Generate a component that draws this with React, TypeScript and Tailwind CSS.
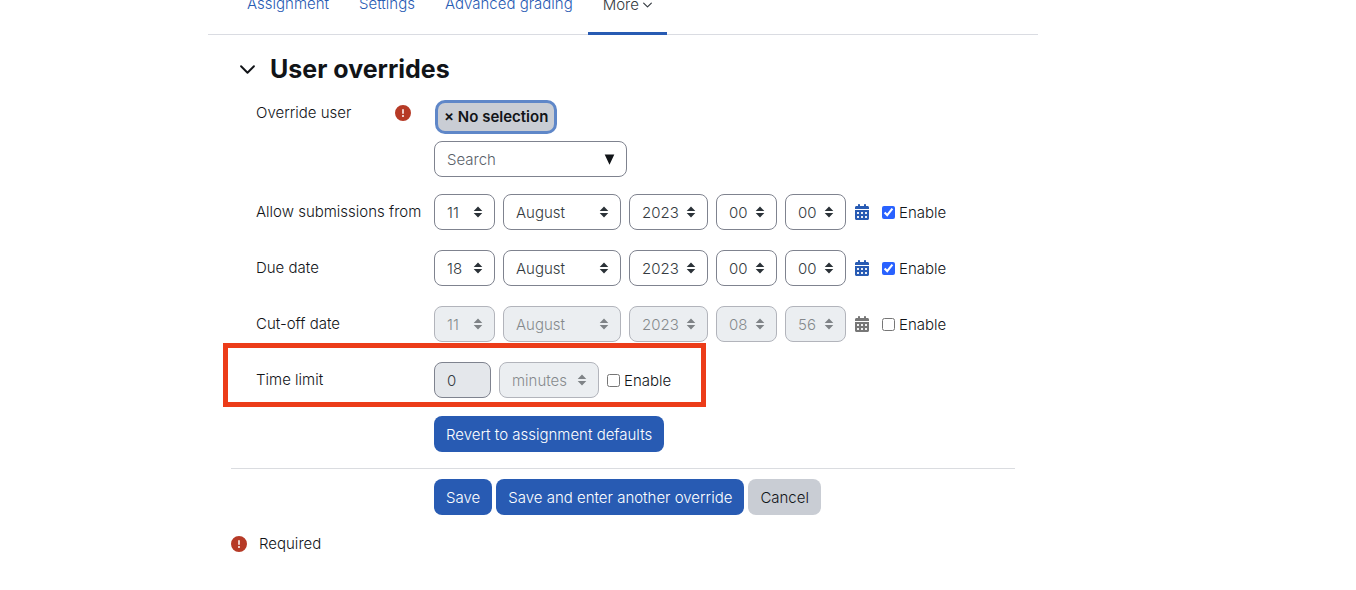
import React from 'react';

import { FaCalendarDays, FaCircleExclamation } from 'react-icons/fa6';

const dates = [
  {
    name: 'Allow submissions from',
    values: ['11', 'August', '2023', '00', '00'],
    enabled: true,
  },
  {
    name: 'Due date',
    values: ['18', 'August', '2023', '00', '00'],
    enabled: true,
  },
  {
    name: 'Cut-off date',
    values: ['11', 'August', '2023', '08', '56'],
    enabled: false,
  },
];

const parts = [
  { name: 'Day', width: 'w-[61px]' },
  { name: 'Month', width: 'w-[118px]' },
  { name: 'Year', width: 'w-[79px]' },
  { name: 'Hour', width: 'w-[61px]' },
  { name: 'Minute', width: 'w-[61px]' },
];

const primary =
  'h-9 px-3 pt-0.5 rounded-lg bg-[#285bb3] text-white whitespace-nowrap';

function Chevron({ className }: { className: string }) {
  return (
    <svg
      className={className}
      viewBox="0 0 14 8"
      fill="none"
      stroke="currentColor"
      strokeWidth="1.8"
      strokeLinecap="round"
      strokeLinejoin="round"
      aria-hidden="true"
    >
      <path d="M1 1l6 6 6-6" />
    </svg>
  );
}

function Select({
  label,
  value,
  width,
  disabled,
}: {
  label: string;
  value: string;
  width: string;
  disabled: boolean;
}) {
  return (
    <div className={`relative ${width} ${disabled ? 'opacity-60' : ''}`}>
      <select
        aria-label={label}
        disabled={disabled}
        defaultValue={value}
        className="block w-full h-9 pl-3 pr-6 pt-0.5 appearance-none rounded-lg border border-[#7f838f] bg-white text-[#343a40] disabled:bg-[#dee4e9] disabled:opacity-100"
      >
        <option>{value}</option>
      </select>
      <svg
        className="absolute right-3 top-3 w-[10px] h-3 pointer-events-none text-[#2b3238]"
        viewBox="0 0 10 12"
        fill="currentColor"
        aria-hidden="true"
      >
        <path d="M5 .5L9.3 5H.7zM5 11.5L.7 7h8.6z" />
      </svg>
    </div>
  );
}

function Enable({ name, checked }: { name: string; checked: boolean }) {
  return (
    <label className="flex items-center gap-1">
      <input
        type="checkbox"
        aria-label={`${name} enable`}
        defaultChecked={checked}
        className="w-[13px] h-[13px] accent-[#2962ff]"
      />
      <span className="pt-0.5">Enable</span>
    </label>
  );
}

function Row({
  label,
  children,
}: {
  label: React.ReactNode;
  children: React.ReactNode;
}) {
  return (
    <div className="relative flex items-start mb-5">
      <div className="w-[203px] shrink-0 flex items-center justify-between pl-[25px] pr-[23px] pt-1.5 whitespace-nowrap">
        {label}
      </div>
      {children}
    </div>
  );
}

export default function App() {
  return (
    <div className="pl-52 font-['Inter',sans-serif] font-light text-[15px] leading-6 text-[#111418]">
      <div className="max-w-[830px]">
        <nav className="flex items-end h-[35px] px-6 border-b border-[#dadce2] text-[#285bb3] whitespace-nowrap">
          <a href="#assignment" className="px-[15px] pb-[18px]">
            Assignment
          </a>
          <a href="#settings" className="px-[15px] pb-[18px]">
            Settings
          </a>
          <a href="#grading" className="px-[15px] pb-[18px]">
            Advanced grading
          </a>
          <a
            href="#more"
            className="flex items-center gap-1 px-[15px] pb-[15px] -mb-px border-b-3 border-[#285bb3] text-[#343a40]"
          >
            More
            <Chevron className="w-[9px] h-[6px]" />
          </a>
        </nav>

        <form className="px-[23px]" onSubmit={(e) => e.preventDefault()}>
          <h2 className="flex items-center h-[68px]">
            <button
              type="button"
              aria-label="Collapse"
              className="w-[39px] pl-[9px]"
            >
              <Chevron className="w-[15px] h-[9px]" />
            </button>
            <span className="text-[25px] font-bold">User overrides</span>
          </h2>

          <div className="flex items-start -mt-2 mb-[17px]">
            <div className="w-[203px] shrink-0 flex items-center justify-between pl-[25px] pr-[23px] pt-1.5">
              <label htmlFor="user">Override user</label>
              <FaCircleExclamation className="w-4 h-4 text-[#b63a26]" />
            </div>
            <div>
              <div className="flex pl-px pt-[5px]">
                <button
                  type="button"
                  className="h-[34px] px-1.5 rounded-[10px] border-3 border-[#5f87c8] bg-[#c9cdd4] font-semibold"
                >
                  × No selection
                </button>
              </div>
              <div className="relative mt-[7px] w-[193px]">
                <input
                  id="user"
                  type="text"
                  placeholder="Search"
                  className="block w-full h-9 px-3 rounded-lg border border-[#7f838f] placeholder:text-[#596169]"
                />
                <svg
                  className="absolute right-3 top-[13px] w-[11px] h-[11px]"
                  viewBox="0 0 11 11"
                  fill="currentColor"
                  aria-hidden="true"
                >
                  <path d="M.7 .5h9.6L5.5 10.7z" />
                </svg>
              </div>
            </div>
          </div>

          {dates.map((date) => (
            <Row key={date.name} label={date.name}>
              <div className="flex items-center gap-2">
                {parts.map((part, i) => (
                  <Select
                    key={part.name}
                    label={`${date.name} ${part.name}`}
                    value={date.values[i]}
                    width={part.width}
                    disabled={!date.enabled}
                  />
                ))}
                <button
                  type="button"
                  aria-label={`${date.name} calendar`}
                  disabled={!date.enabled}
                  className="px-px mr-1 text-[#285bb3] disabled:text-[#777777]"
                >
                  <FaCalendarDays className="w-[14px] h-4" />
                </button>
                <Enable name={date.name} checked={date.enabled} />
              </div>
            </Row>
          ))}

          <Row label={<label htmlFor="limit">Time limit</label>}>
            <div className="flex items-center gap-2">
              <input
                id="limit"
                type="text"
                disabled
                defaultValue="0"
                className="w-[57px] h-9 px-3 rounded-lg border border-[#7f838f] bg-[#e4e7eb] text-[#343a40]"
              />
              <Select
                label="Time unit"
                value="minutes"
                width="w-[100px]"
                disabled
              />
              <Enable name="Time limit" checked={false} />
            </div>
            <div className="absolute -left-2 -top-[19px] w-[483px] h-16 border-5 border-[#ec3c19] pointer-events-none" />
          </Row>

          <div className="-mt-0.5 pl-[203px] pb-4 border-b border-[#dadce0]">
            <button type="button" className={primary}>
              Revert to assignment defaults
            </button>
          </div>

          <div className="flex gap-1 pt-[10px] pl-[203px]">
            <button type="submit" className={primary}>
              Save
            </button>
            <button type="submit" className={primary}>
              Save and enter another override
            </button>
            <button
              type="button"
              className="h-9 px-3 pt-0.5 rounded-lg bg-[#c9cdd4]"
            >
              Cancel
            </button>
          </div>

          <div className="flex items-center gap-3 mt-[17px]">
            <FaCircleExclamation className="w-4 h-4 text-[#b63a26]" />
            Required
          </div>
        </form>
      </div>
    </div>
  );
}
